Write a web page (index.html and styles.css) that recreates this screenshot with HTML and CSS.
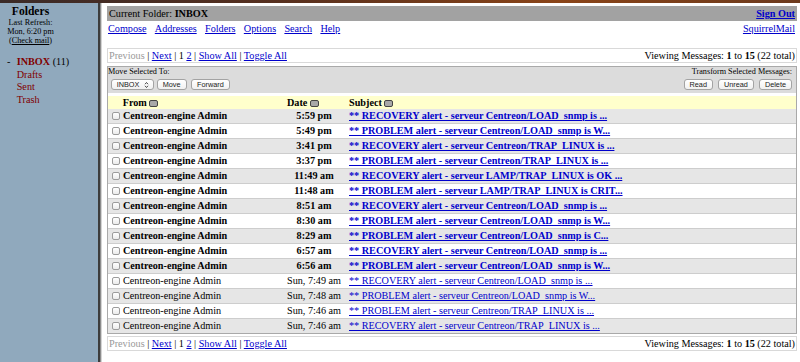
FILE: index.html
```html
<!DOCTYPE html>
<html>
<head>
<meta charset="utf-8">
<title>SquirrelMail - INBOX</title>
<link rel="stylesheet" href="styles.css">
</head>
<body>
<div class="topstrip"></div>
<div class="frames">
  <aside class="folders">
    <div class="fhead">
      <div class="ftitle">Folders</div>
      <div class="fsmall">Last Refresh:<br>Mon, 6:20 pm<br>(<a href="#" class="check">Check mail</a>)</div>
    </div>
    <ul class="flist">
      <li><span class="dash">-</span><a href="#" class="fname cur">INBOX</a> (11)</li>
      <li class="ind"><a href="#" class="fname">Drafts</a></li>
      <li class="ind"><a href="#" class="fname">Sent</a></li>
      <li class="ind"><a href="#" class="fname">Trash</a></li>
    </ul>
  </aside>
  <div class="divider"></div>
  <main class="main">
    <div class="titlebar">
      <span>Current Folder: <b>INBOX</b></span>
      <a href="#" class="lnk"><b>Sign Out</b></a>
    </div>
    <div class="navrow">
      <nav class="navlinks">
        <a href="#" class="lnk">Compose</a>
        <a href="#" class="lnk">Addresses</a>
        <a href="#" class="lnk">Folders</a>
        <a href="#" class="lnk">Options</a>
        <a href="#" class="lnk">Search</a>
        <a href="#" class="lnk">Help</a>
      </nav>
      <a href="#" class="lnk">SquirrelMail</a>
    </div>
    <div class="paging">
      <span><span class="dis">Previous</span> | <a href="#" class="lnk">Next</a> | 1 <a href="#" class="lnk">2</a> | <a href="#" class="lnk">Show All</a> | <a href="#" class="lnk">Toggle All</a></span>
      <span>Viewing Messages: <b>1</b> to <b>15</b> (22 total)</span>
    </div>
    <div class="msgbox">
      <div class="toolbar">
        <div class="tgroup">
          <div class="tlabel">Move Selected To:</div>
          <div class="tcontrols">
            <div class="select"><span>INBOX</span><svg width="5" height="8" viewBox="0 0 5 8"><path d="M1 3.2 L2.5 1.5 L4 3.2 M1 4.8 L2.5 6.5 L4 4.8" fill="none" stroke="#333" stroke-width="0.9"/></svg></div>
            <span class="btn">Move</span>
            <span class="btn">Forward</span>
          </div>
        </div>
        <div class="tgroup right">
          <div class="tlabel">Transform Selected Messages:</div>
          <div class="tcontrols">
            <span class="btn">Read</span>
            <span class="btn">Unread</span>
            <span class="btn">Delete</span>
          </div>
        </div>
      </div>
      <table class="msgs">
        <thead>
          <tr>
            <th class="cfrom">From <svg class="sort" width="9" height="7" viewBox="0 0 9 7"><rect x="0.5" y="0.5" width="8" height="6" rx="1.5" fill="#a8a8a8" stroke="#444"/></svg></th>
            <th class="cdate">Date <svg class="sort" width="9" height="7" viewBox="0 0 9 7"><rect x="0.5" y="0.5" width="8" height="6" rx="1.5" fill="#a8a8a8" stroke="#444"/></svg></th>
            <th class="csubj">Subject <svg class="sort" width="9" height="7" viewBox="0 0 9 7"><rect x="0.5" y="0.5" width="8" height="6" rx="1.5" fill="#a8a8a8" stroke="#444"/></svg></th>
          </tr>
        </thead>
        <tbody>
          <tr class="unread"><td class="cfrom"><span class="cb"></span>Centreon-engine Admin</td><td class="cdate">5:59 pm</td><td class="csubj"><a href="#" class="lnk">** RECOVERY alert - serveur Centreon/LOAD_snmp is ...</a></td></tr>
          <tr class="unread"><td class="cfrom"><span class="cb"></span>Centreon-engine Admin</td><td class="cdate">5:49 pm</td><td class="csubj"><a href="#" class="lnk">** PROBLEM alert - serveur Centreon/LOAD_snmp is W...</a></td></tr>
          <tr class="unread"><td class="cfrom"><span class="cb"></span>Centreon-engine Admin</td><td class="cdate">3:41 pm</td><td class="csubj"><a href="#" class="lnk">** RECOVERY alert - serveur Centreon/TRAP_LINUX is ...</a></td></tr>
          <tr class="unread"><td class="cfrom"><span class="cb"></span>Centreon-engine Admin</td><td class="cdate">3:37 pm</td><td class="csubj"><a href="#" class="lnk">** PROBLEM alert - serveur Centreon/TRAP_LINUX is ...</a></td></tr>
          <tr class="unread"><td class="cfrom"><span class="cb"></span>Centreon-engine Admin</td><td class="cdate">11:49 am</td><td class="csubj"><a href="#" class="lnk">** RECOVERY alert - serveur LAMP/TRAP_LINUX is OK ...</a></td></tr>
          <tr class="unread"><td class="cfrom"><span class="cb"></span>Centreon-engine Admin</td><td class="cdate">11:48 am</td><td class="csubj"><a href="#" class="lnk">** PROBLEM alert - serveur LAMP/TRAP_LINUX is CRIT...</a></td></tr>
          <tr class="unread"><td class="cfrom"><span class="cb"></span>Centreon-engine Admin</td><td class="cdate">8:51 am</td><td class="csubj"><a href="#" class="lnk">** RECOVERY alert - serveur Centreon/LOAD_snmp is ...</a></td></tr>
          <tr class="unread"><td class="cfrom"><span class="cb"></span>Centreon-engine Admin</td><td class="cdate">8:30 am</td><td class="csubj"><a href="#" class="lnk">** PROBLEM alert - serveur Centreon/LOAD_snmp is W...</a></td></tr>
          <tr class="unread"><td class="cfrom"><span class="cb"></span>Centreon-engine Admin</td><td class="cdate">8:29 am</td><td class="csubj"><a href="#" class="lnk">** PROBLEM alert - serveur Centreon/LOAD_snmp is C...</a></td></tr>
          <tr class="unread"><td class="cfrom"><span class="cb"></span>Centreon-engine Admin</td><td class="cdate">6:57 am</td><td class="csubj"><a href="#" class="lnk">** RECOVERY alert - serveur Centreon/LOAD_snmp is ...</a></td></tr>
          <tr class="unread"><td class="cfrom"><span class="cb"></span>Centreon-engine Admin</td><td class="cdate">6:56 am</td><td class="csubj"><a href="#" class="lnk">** PROBLEM alert - serveur Centreon/LOAD_snmp is W...</a></td></tr>
          <tr><td class="cfrom"><span class="cb"></span>Centreon-engine Admin</td><td class="cdate">Sun, 7:49 am</td><td class="csubj"><a href="#" class="lnk">** RECOVERY alert - serveur Centreon/LOAD_snmp is ...</a></td></tr>
          <tr><td class="cfrom"><span class="cb"></span>Centreon-engine Admin</td><td class="cdate">Sun, 7:48 am</td><td class="csubj"><a href="#" class="lnk">** PROBLEM alert - serveur Centreon/LOAD_snmp is W...</a></td></tr>
          <tr><td class="cfrom"><span class="cb"></span>Centreon-engine Admin</td><td class="cdate">Sun, 7:46 am</td><td class="csubj"><a href="#" class="lnk">** PROBLEM alert - serveur Centreon/TRAP_LINUX is ...</a></td></tr>
          <tr><td class="cfrom"><span class="cb"></span>Centreon-engine Admin</td><td class="cdate">Sun, 7:46 am</td><td class="csubj"><a href="#" class="lnk">** RECOVERY alert - serveur Centreon/TRAP_LINUX is ...</a></td></tr>
        </tbody>
      </table>
    </div>
    <div class="paging bottom">
      <span><span class="dis">Previous</span> | <a href="#" class="lnk">Next</a> | 1 <a href="#" class="lnk">2</a> | <a href="#" class="lnk">Show All</a> | <a href="#" class="lnk">Toggle All</a></span>
      <span>Viewing Messages: <b>1</b> to <b>15</b> (22 total)</span>
    </div>
  </main>
</div>
</body>
</html>
```

FILE: styles.css
```css
* { box-sizing: border-box; }
html, body { margin: 0; padding: 0; }
body {
  width: 800px;
  height: 362px;
  overflow: hidden;
  font-family: "Liberation Serif", "Times New Roman", serif;
  font-size: 10.2px;
  color: #000;
  background: #fff;
}
a { color: inherit; }
.lnk { color: #0000cc; text-decoration: underline; }

.topstrip {
  height: 3px;
  background: linear-gradient(90deg, #3a2a27 0%, #57301f 35%, #8a4418 70%, #6c3a1d 100%);
}
.frames { display: flex; height: 359px; }

/* left folder pane */
.folders { width: 98px; flex: none; background: #90a9bd; }
.fhead { width: 61px; text-align: center; padding-top: 2px; }
.ftitle { font-size: 11.6px; font-weight: bold; line-height: 13px; }
.fsmall { font-size: 8.2px; line-height: 9px; }
.check { color: #000; }
.flist { list-style: none; margin: 11px 0 0; padding: 0 0 0 7px; line-height: 12.5px; }
.flist .ind { padding-left: 9.7px; }
.dash { display: inline-block; width: 9.7px; }
.fname { color: #800000; text-decoration: none; }
.fname.cur { font-weight: bold; }

.divider {
  width: 4px;
  flex: none;
  background: #8c8c8c;
  border-left: 2px solid #3c3c3c;
  border-right: 1px solid #d4d4d4;
}

/* main pane */
.main { flex: 1; padding: 3px 3px 0 5px; }
.titlebar {
  height: 15px;
  background: #a2a2a2;
  display: flex;
  justify-content: space-between;
  align-items: center;
  padding: 0 2px;
}
.navrow {
  height: 14px;
  margin-bottom: 13px;
  display: flex;
  justify-content: space-between;
  align-items: center;
  padding: 0 2px 0 1px;
}
.navlinks { display: flex; gap: 8.3px; }

.paging {
  height: 15px;
  border: 1px solid #d9d9d9;
  display: flex;
  justify-content: space-between;
  align-items: center;
  padding: 0 1px;
}
.paging.bottom { margin-top: 2px; }
.dis { color: #999; }

.msgbox { margin-top: 3px; border: 1px solid #a9a9a9; }
.toolbar {
  height: 26px;
  background: #dcdcdc;
  margin-bottom: 3px;
  display: flex;
  justify-content: space-between;
  padding: 0 4px 0 0;
}
.tgroup { display: flex; flex-direction: column; }
.tgroup.right { align-items: flex-end; }
.tlabel { font-size: 8.2px; line-height: 10px; }
.tcontrols { display: flex; gap: 4.5px; margin-top: 2px; padding-left: 2.7px; }
.tgroup.right .tcontrols { gap: 5px; padding-left: 0; }
.select, .btn {
  height: 11px;
  border: 1px solid #a3a3a3;
  border-radius: 3px;
  background: linear-gradient(#ffffff, #f1f1f1);
  font-family: "Liberation Sans", Arial, sans-serif;
  font-size: 7.3px;
  line-height: 9px;
  color: #222;
}
.select {
  width: 43px;
  display: flex;
  align-items: center;
  justify-content: space-between;
  padding: 0 4px 0 5px;
  margin-right: -1.5px;
}
.btn { padding: 0 5px; }

.msgs { width: 100%; border-collapse: collapse; }
.msgs th {
  height: 13px;
  padding: 0;
  background: #ffffcc;
  text-align: left;
  font-weight: bold;
  white-space: nowrap;
}
.msgs th.cfrom { padding-left: 14.7px; }
.msgs th.cdate { padding-left: 2px; }
.msgs th.csubj { padding-left: 6px; }
.sort { vertical-align: -1px; margin-left: 0; }
.msgs td {
  height: 14px;
  line-height: 14px;
  padding: 0;
  white-space: nowrap;
  border-bottom: 1px solid #cdcdcd;
}
.msgs tbody tr:last-child td { border-bottom: 0; }
.msgs tbody tr:nth-child(odd) td { background: #e6e6e6; }
.msgs tbody tr:nth-child(even) td { background: #ffffff; }
.msgs tr.unread td { font-weight: bold; }
.msgs td.cfrom { width: 177px; padding-left: 3.7px; }
.msgs td.cdate { width: 58px; text-align: center; }
.msgs td.csubj { padding-left: 6px; }
.cb {
  display: inline-block;
  width: 8px;
  height: 8px;
  margin-right: 3.3px;
  border: 1px solid #9c9c9c;
  border-radius: 2px;
  background: linear-gradient(#ffffff, #ececec);
  vertical-align: -1px;
}
```
